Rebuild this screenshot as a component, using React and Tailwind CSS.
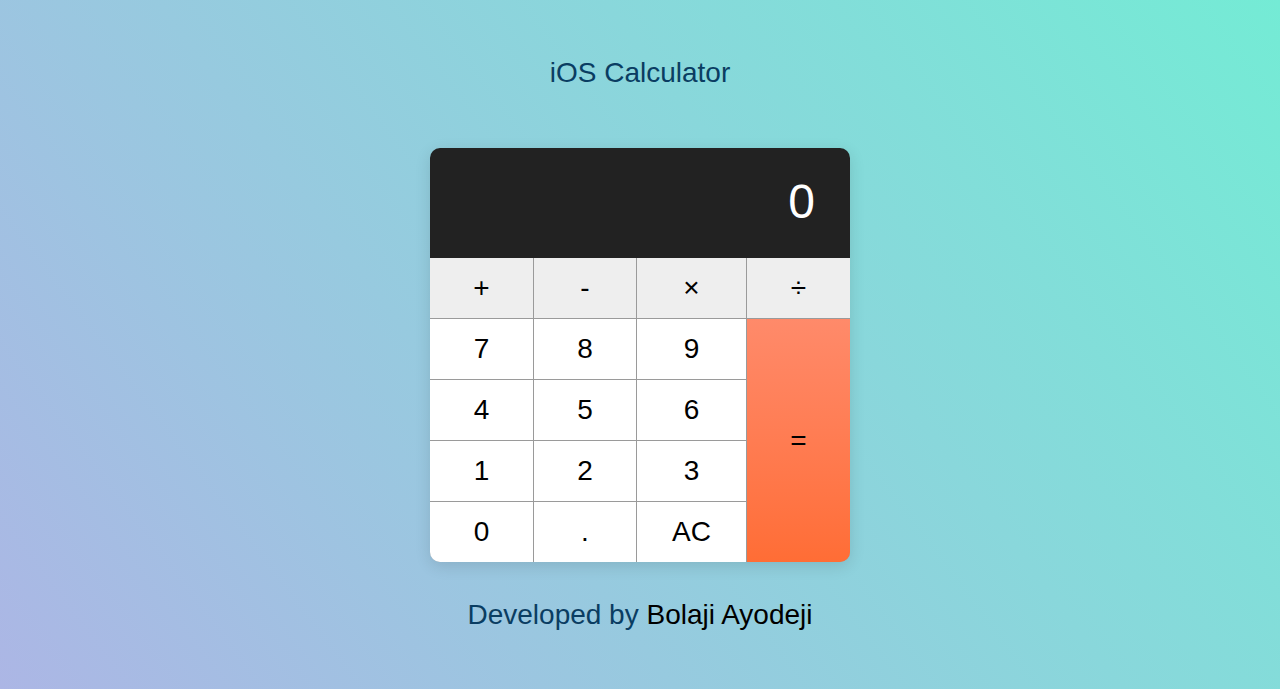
import React, { useState } from "react";

const ops = ["+", "-", "×", "÷"];
const digits = [
  ["7", "8", "9"],
  ["4", "5", "6"],
  ["1", "2", "3"],
  ["0", ".", "AC"],
];

const App = () => {
  const [display, setDisplay] = useState("0");

  const press = (key) => {
    if (key === "AC") return setDisplay("0");
    setDisplay((prev) => (prev === "0" && key !== "." ? key : prev + key));
  };

  return (
    <div
      className="min-h-screen w-full flex flex-col items-center bg-[linear-gradient(53deg,#acb6e5,#74ebd5)] pt-[57px]"
      style={{ fontFamily: '"Liberation Sans", Arial, sans-serif' }}
    >
      <h1 className="text-[28px] leading-8 text-[#0a3d62] font-normal">iOS Calculator</h1>

      <div className="mt-[59px] w-[420px] rounded-[10px] overflow-hidden shadow-[0_4px_16px_rgba(0,0,0,0.12)]">
        <div className="h-[110px] bg-[#222222] flex items-center justify-end pr-[35px] pb-[2px]">
          <span className="text-white text-[48px] leading-none">{display}</span>
        </div>
        <div className="grid grid-cols-[103px_102px_109px_103px] grid-rows-[60px_60px_60px_60px_60px] gap-px bg-[#9a9a9a] text-[28px] text-black">
          {ops.map((op) => (
            <button
              key={op}
              onClick={() => press(op)}
              className="bg-[#eeeeee] flex items-center justify-center"
            >
              {op}
            </button>
          ))}
          {digits.map((row, i) => (
            <React.Fragment key={i}>
              {row.map((d) => (
                <button
                  key={d}
                  onClick={() => press(d)}
                  className="bg-white flex items-center justify-center"
                >
                  {d}
                </button>
              ))}
              {i === 0 && (
                <button className="row-span-4 bg-linear-to-b from-[#ff8a6a] to-[#ff6d35] flex items-center justify-center">
                  =
                </button>
              )}
            </React.Fragment>
          ))}
        </div>
      </div>

      <p className="mt-[37px] text-[28px] leading-8 text-[#0a3d62]">
        Developed by <span className="text-black">Bolaji Ayodeji</span>
      </p>
    </div>
  );
};

export default App;
